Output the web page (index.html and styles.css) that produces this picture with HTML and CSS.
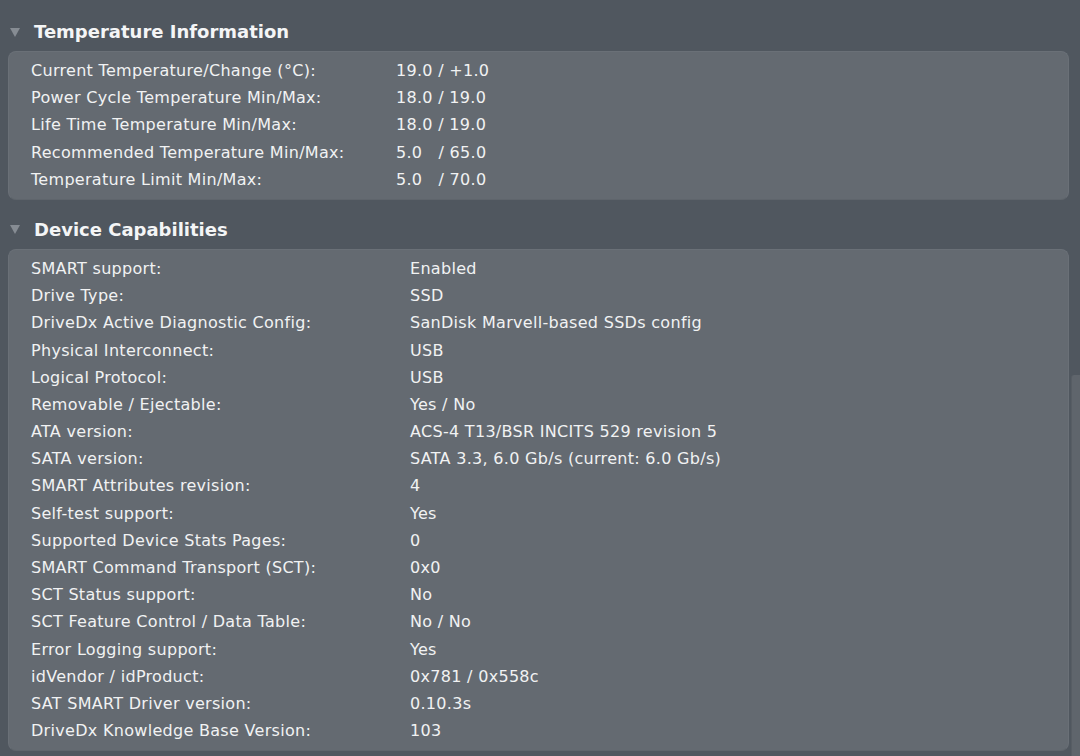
FILE: index.html
```html
<!DOCTYPE html>
<html>
<head>
<meta charset="utf-8">
<link rel="stylesheet" href="styles.css">
</head>
<body>
<div class="page">
  <div class="content">
    <section class="section">
      <div class="sec-head"><span class="tri"></span><span class="sec-title">Temperature Information</span></div>
      <div class="panel panel-temp">
        <div class="row"><span class="lbl">Current Temperature/Change (°C):</span><span class="val">19.0 / +1.0</span></div>
        <div class="row"><span class="lbl">Power Cycle Temperature Min/Max:</span><span class="val">18.0 / 19.0</span></div>
        <div class="row"><span class="lbl">Life Time Temperature Min/Max:</span><span class="val">18.0 / 19.0</span></div>
        <div class="row"><span class="lbl">Recommended Temperature Min/Max:</span><span class="val">5.0&nbsp;&nbsp; / 65.0</span></div>
        <div class="row"><span class="lbl">Temperature Limit Min/Max:</span><span class="val">5.0&nbsp;&nbsp; / 70.0</span></div>
      </div>
    </section>
    <section class="section">
      <div class="sec-head"><span class="tri"></span><span class="sec-title">Device Capabilities</span></div>
      <div class="panel panel-dev">
        <div class="row"><span class="lbl">SMART support:</span><span class="val">Enabled</span></div>
        <div class="row"><span class="lbl">Drive Type:</span><span class="val">SSD</span></div>
        <div class="row"><span class="lbl">DriveDx Active Diagnostic Config:</span><span class="val">SanDisk Marvell-based SSDs config</span></div>
        <div class="row"><span class="lbl">Physical Interconnect:</span><span class="val">USB</span></div>
        <div class="row"><span class="lbl">Logical Protocol:</span><span class="val">USB</span></div>
        <div class="row"><span class="lbl">Removable / Ejectable:</span><span class="val">Yes / No</span></div>
        <div class="row"><span class="lbl">ATA version:</span><span class="val">ACS-4 T13/BSR INCITS 529 revision 5</span></div>
        <div class="row"><span class="lbl">SATA version:</span><span class="val">SATA 3.3, 6.0 Gb/s (current: 6.0 Gb/s)</span></div>
        <div class="row"><span class="lbl">SMART Attributes revision:</span><span class="val">4</span></div>
        <div class="row"><span class="lbl">Self-test support:</span><span class="val">Yes</span></div>
        <div class="row"><span class="lbl">Supported Device Stats Pages:</span><span class="val">0</span></div>
        <div class="row"><span class="lbl">SMART Command Transport (SCT):</span><span class="val">0x0</span></div>
        <div class="row"><span class="lbl">SCT Status support:</span><span class="val">No</span></div>
        <div class="row"><span class="lbl">SCT Feature Control / Data Table:</span><span class="val">No / No</span></div>
        <div class="row"><span class="lbl">Error Logging support:</span><span class="val">Yes</span></div>
        <div class="row"><span class="lbl">idVendor / idProduct:</span><span class="val">0x781 / 0x558c</span></div>
        <div class="row"><span class="lbl">SAT SMART Driver version:</span><span class="val">0.10.3s</span></div>
        <div class="row"><span class="lbl">DriveDx Knowledge Base Version:</span><span class="val">103</span></div>
      </div>
    </section>
  </div>
  <div class="scrollbar"><div class="thumb"></div></div>
</div>
</body>
</html>
```
FILE: styles.css
```css
html, body {
  margin: 0;
  padding: 0;
  background: #50575f;
}
body {
  width: 1080px;
  height: 756px;
  overflow: hidden;
  font-family: "DejaVu Sans", "Liberation Sans", sans-serif;
  color: #f1f2f3;
}
.page {
  display: flex;
  height: 756px;
}
.content {
  flex: 1;
  padding: 2px 0 0 8px;
}
.section {
  display: flex;
  flex-direction: column;
}
.sec-head {
  height: 49px;
  display: flex;
  align-items: center;
  padding-top: 10px;
  box-sizing: border-box;
  margin-left: -8px;
  padding-left: 10px;
}
.tri {
  width: 0;
  height: 0;
  border-left: 5px solid transparent;
  border-right: 5px solid transparent;
  border-top: 9px solid #868c93;
  margin-right: 14px;
  margin-top: 1px;
}
.sec-title {
  font-weight: bold;
  font-size: 18px;
  color: #f4f5f6;
}
.panel {
  background: #646a71;
  border-radius: 8px;
  border: 1px solid #6a7077;
  border-bottom-color: #5f656c;
  padding: 5px 0 6px 22px;
  display: grid;
  grid-auto-rows: 27.2px;
  align-items: center;
}
.panel-temp {
  grid-template-columns: 365px 1fr;
}
.panel-dev {
  grid-template-columns: 379px 1fr;
}
.row {
  display: contents;
}
.lbl, .val {
  font-size: 16px;
  letter-spacing: 0.3px;
  line-height: 27.2px;
  white-space: nowrap;
}
.scrollbar {
  width: 9px;
  display: flex;
  flex-direction: column;
  justify-content: flex-end;
  padding-left: 2px;
}
.thumb {
  height: 381px;
  background: #5f656c;
  border-left: 1px solid #575d64;
  border-radius: 3px 0 0 0;
}
```
